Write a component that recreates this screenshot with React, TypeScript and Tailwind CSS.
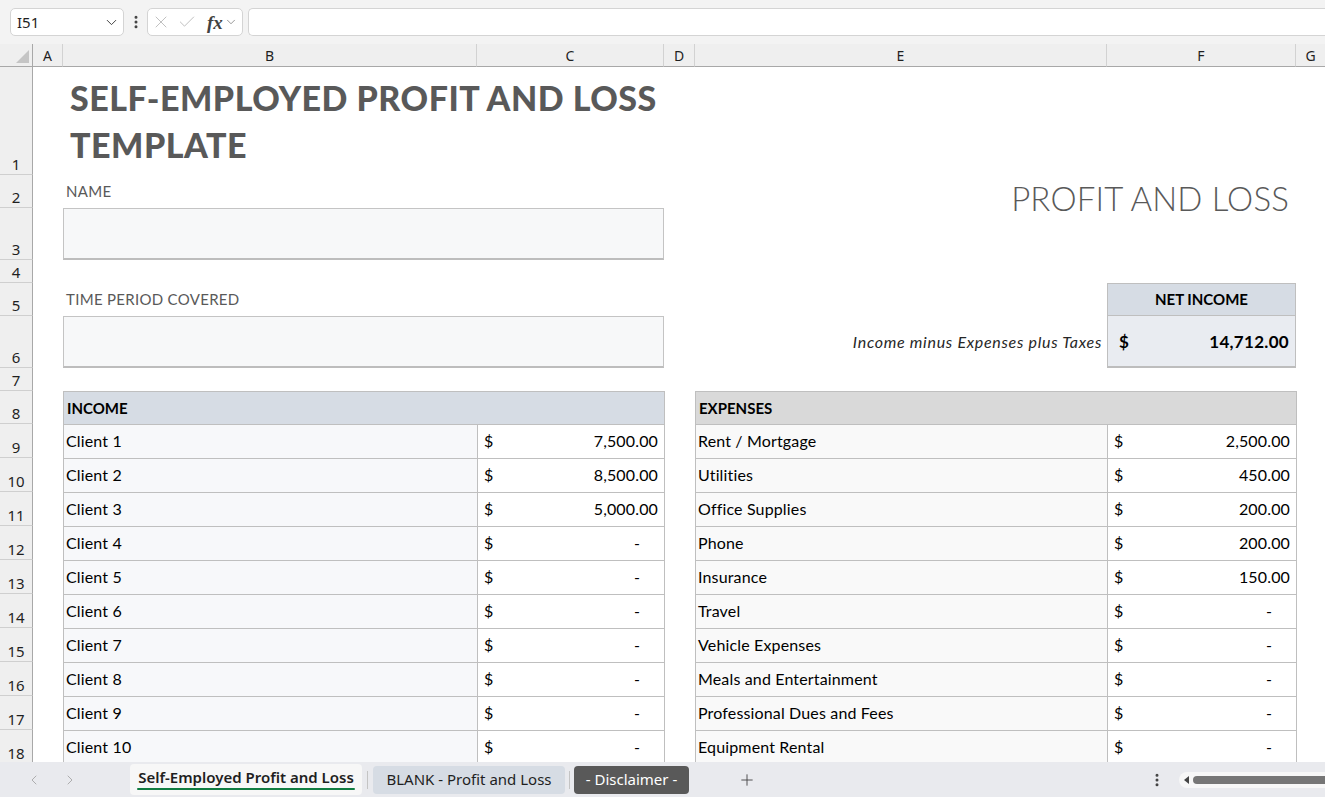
import { Check, ChevronDown, ChevronLeft, ChevronRight, EllipsisVertical, Plus, X } from "lucide-react";

type Line = { label: string; amount: string };

const income: Line[] = [
  { label: "Client 1", amount: "7,500.00" },
  { label: "Client 2", amount: "8,500.00" },
  { label: "Client 3", amount: "5,000.00" },
  { label: "Client 4", amount: "-" },
  { label: "Client 5", amount: "-" },
  { label: "Client 6", amount: "-" },
  { label: "Client 7", amount: "-" },
  { label: "Client 8", amount: "-" },
  { label: "Client 9", amount: "-" },
  { label: "Client 10", amount: "-" },
];

const expenses: Line[] = [
  { label: "Rent / Mortgage", amount: "2,500.00" },
  { label: "Utilities", amount: "450.00" },
  { label: "Office Supplies", amount: "200.00" },
  { label: "Phone", amount: "200.00" },
  { label: "Insurance", amount: "150.00" },
  { label: "Travel", amount: "-" },
  { label: "Vehicle Expenses", amount: "-" },
  { label: "Meals and Entertainment", amount: "-" },
  { label: "Professional Dues and Fees", amount: "-" },
  { label: "Equipment Rental", amount: "-" },
];

const columns = ["A", "B", "C", "D", "E", "F", "G"];
const rowNumbers = Array.from({ length: 18 }, (_, i) => i + 1);

function FormulaBar() {
  return (
    <div className="h-[44px] shrink-0 bg-[#f3f3f3] flex items-center font-['Noto_Sans',sans-serif]">
      <div className="ml-[10px] w-[114px] h-[28px] rounded-[5px] border border-[#d4d4d4] bg-white flex items-center justify-between pl-[6px] pr-[3px]">
        <span className="text-[15px] text-[#1f1f1f]">I51</span>
        <ChevronDown size={17} strokeWidth={1.4} className="text-[#424242]" />
      </div>
      <EllipsisVertical size={16} strokeWidth={2.5} className="ml-[4px] text-[#424242]" />
      <div className="ml-[3px] w-[96px] h-[28px] rounded-[5px] border border-[#d4d4d4] bg-white flex items-center pl-[3px]">
        <X size={20} strokeWidth={1} className="text-[#b3b3b3]" />
        <Check size={20} strokeWidth={1} className="ml-[6px] text-[#b3b3b3]" />
        <span className="ml-[10px] font-['Liberation_Serif',serif] italic font-bold text-[19px] text-[#424242] leading-none">fx</span>
        <ChevronDown size={14} strokeWidth={1.2} className="ml-[1px] text-[#6b6b6b]" />
      </div>
      <div className="ml-[5px] flex-1 h-[28px] rounded-l-[5px] border border-r-0 border-[#d4d4d4] bg-white" />
    </div>
  );
}

function LedgerTable({
  title,
  lines,
  cols,
  headBg,
  labelBg,
}: {
  title: string;
  lines: Line[];
  cols: string;
  headBg: string;
  labelBg: string;
}) {
  return (
    <div className={`grid ${cols} grid-rows-[33px_repeat(10,34px)] border-l border-t border-[#bfbfbf] text-[16px] tracking-[0.15px] text-black`}>
      <div className={`col-span-2 flex items-center pl-[3px] font-bold tracking-normal text-[15px] border-r border-b border-[#bfbfbf] ${headBg}`}>{title}</div>
      {lines.map((line) => (
        <div key={line.label} className="contents">
          <div className={`flex items-center pl-[2px] pb-[1px] border-r border-b border-[#bfbfbf] ${labelBg}`}>{line.label}</div>
          <div className="flex items-center justify-between pl-[6px] pb-[1px] border-r border-b border-[#bfbfbf] bg-white">
            <span>$</span>
            <span className={line.amount === "-" ? "pr-[24px]" : "pr-[6px]"}>{line.amount}</span>
          </div>
        </div>
      ))}
    </div>
  );
}

function Sheet() {
  return (
    <div className="flex-1 overflow-hidden bg-white">
      <div className="grid grid-cols-[33px_30px_414px_187px_31px_412px_189px_1fr] grid-rows-[23px_108px_33px_52px_23px_33px_52px_23px_33px_repeat(10,34px)] font-['Lato',sans-serif]">
        {/* corner + column letters */}
        <div className="bg-[#efefef] border-r border-b border-[#a8a8a8] flex items-end justify-end p-[3px]">
          <div className="w-0 h-0 border-l-[13px] border-l-transparent border-b-[13px] border-b-[#c5c5c5]" />
        </div>
        {columns.map((c, i) => (
          <div
            key={c}
            className={`bg-[#efefef] border-b border-[#a8a8a8] flex items-center justify-center text-[14px] text-[#1f1f1f] font-['Noto_Sans',sans-serif] ${i < columns.length - 1 ? "border-r border-r-[#d2d2d2]" : ""}`}
          >
            {c}
          </div>
        ))}

        {/* row numbers */}
        {rowNumbers.map((n) => (
          <div
            key={n}
            style={{ gridRowStart: n + 1 }}
            className="col-start-1 bg-[#efefef] border-r border-r-[#a8a8a8] border-b border-b-[#cfcfcf] flex items-end justify-center text-[15px] leading-[20px] text-[#1f1f1f] font-['Noto_Sans',sans-serif]"
          >
            {n}
          </div>
        ))}

        {/* heading */}
        <div className="col-start-3 col-span-2 row-start-2 flex items-center pl-[7px]">
          <h1 className="whitespace-nowrap text-[34px] leading-[47px] font-black tracking-[0.5px] text-[#595959]">
            SELF-EMPLOYED PROFIT AND LOSS
            <br />
            TEMPLATE
          </h1>
        </div>

        <div className="col-start-3 col-span-2 row-start-3 flex items-center pl-[3px] text-[15px] tracking-[0.3px] text-[#595959]">NAME</div>
        <div className="col-start-3 col-span-2 row-start-4 bg-[#f7f8f9] border border-[#c4c4c4] border-b-2 border-b-[#bdbdbd]" />

        <div className="col-start-6 col-span-2 row-start-3 row-span-2 flex items-start justify-end pr-[7px] pt-[7px]">
          <span className="text-[33px] leading-none font-light tracking-[0.15px] text-[#595959]">PROFIT AND LOSS</span>
        </div>

        <div className="col-start-3 col-span-2 row-start-6 flex items-center pl-[3px] text-[15px] tracking-[0.3px] text-[#595959]">TIME PERIOD COVERED</div>
        <div className="col-start-3 col-span-2 row-start-7 bg-[#f7f8f9] border border-[#c4c4c4] border-b-2 border-b-[#bdbdbd]" />

        {/* net income summary */}
        <div className="col-start-7 row-start-6 bg-[#d6dce4] border border-[#bfbfbf] flex items-center justify-center text-[15px] font-bold text-black">
          NET INCOME
        </div>
        <div className="col-start-6 row-start-7 flex items-center justify-end pr-[5px] text-[16px] tracking-[0.7px] italic text-[#262626]">
          Income minus Expenses plus Taxes
        </div>
        <div className="col-start-7 row-start-7 bg-[#e9ecf1] border-x border-[#bfbfbf] border-b-2 border-b-[#bdbdbd] flex items-center justify-between pl-[11px] pr-[6px] pt-[2px] text-[17px] tracking-[0.3px] font-bold text-black">
          <span>$</span>
          <span>14,712.00</span>
        </div>

        <div className="col-start-3 row-start-9 col-span-2 row-span-11 grid">
          <LedgerTable title="INCOME" lines={income} cols="grid-cols-[414px_187px]" headBg="bg-[#d6dce4]" labelBg="bg-[#f7f8fa]" />
        </div>
        <div className="col-start-6 row-start-9 col-span-2 row-span-11 grid">
          <LedgerTable title="EXPENSES" lines={expenses} cols="grid-cols-[412px_189px]" headBg="bg-[#d9d9d9]" labelBg="bg-[#f9f9f9]" />
        </div>
      </div>
    </div>
  );
}

function SheetTabs() {
  return (
    <div className="h-[35px] shrink-0 bg-[#e9eaee] flex items-center font-['Noto_Sans',sans-serif] text-[15px]">
      <ChevronLeft size={16} strokeWidth={1.3} className="ml-[26px] text-[#a3a3a3]" />
      <ChevronRight size={16} strokeWidth={1.3} className="ml-[20px] text-[#a3a3a3]" />
      <div className="ml-[52px] self-start mt-[2px] h-[31px] w-[232px] bg-[#f7f7f7] rounded-[4px] flex items-center justify-center pb-[5px] relative">
        <span className="font-semibold text-[#1f1f1f]">Self-Employed Profit and Loss</span>
        <div className="absolute bottom-[5px] left-[7px] right-[7px] h-[2px] bg-[#107c41] rounded-full" />
      </div>
      <div className="mx-[5px] w-px h-[18px] bg-[#c4c4c4]" />
      <div className="h-[28px] w-[192px] bg-[#d6dce4] rounded-[4px] flex items-center justify-center text-[#1f1f1f]">
        BLANK - Profit and Loss
      </div>
      <div className="mx-[4px] w-px h-[18px] bg-[#c4c4c4]" />
      <div className="h-[28px] w-[115px] bg-[#595959] rounded-[4px] flex items-center justify-center text-white">
        - Disclaimer -
      </div>
      <Plus size={18} strokeWidth={1.2} className="ml-[49px] text-[#424242]" />
      <EllipsisVertical size={16} strokeWidth={2.5} className="ml-[393px] text-[#424242]" />
      <div className="ml-[14px] flex-1 h-[16px] rounded-l-full bg-[#f7f7f7] flex items-center pl-[5px]">
        <div className="w-0 h-0 border-y-[4px] border-y-transparent border-r-[5px] border-r-[#444444]" />
        <div className="ml-[4px] flex-1 h-[8px] rounded-l-full bg-[#767676]" />
      </div>
    </div>
  );
}

export default function App() {
  return (
    <div className="h-[797px] w-full overflow-hidden flex flex-col">
      <FormulaBar />
      <Sheet />
      <SheetTabs />
    </div>
  );
}
